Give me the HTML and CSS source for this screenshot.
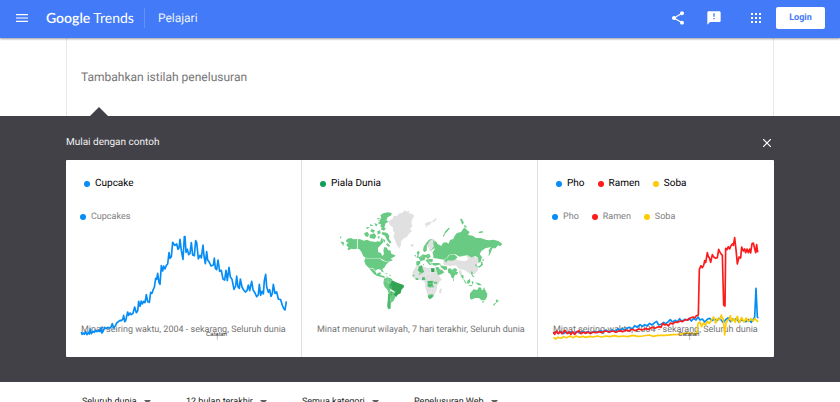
FILE: index.html
```html
<!DOCTYPE html>
<html lang="id">
<head>
<meta charset="utf-8">
<meta name="viewport" content="width=device-width, initial-scale=1">
<title>Google Trends</title>
<link rel="stylesheet" href="styles.css">
</head>
<body>
<header class="topbar">
  <button class="icon-button" type="button" aria-label="Menu">
    <svg width="12" height="8" viewBox="0 0 12 8" fill="currentColor"><path d="M0 0h12v1.200H0zM0 3.400h12v1.200H0zM0 6.800h12v1.200H0z"/></svg>
  </button>
  <a class="logo" href="#"><span class="logo-google">Google</span><span class="logo-trends">Trends</span></a>
  <a class="page-name" href="#">Pelajari</a>
  <div class="actions">
    <button class="icon-button" type="button" aria-label="Bagikan">
      <svg width="16" height="16" viewBox="0 0 24 24" fill="currentColor"><path d="M18 16.080c-.76 0-1.440.3-1.960.77L8.910 12.700c.05-.23.09-.46.09-.7s-.04-.47-.09-.7l7.050-4.110c.54.5 1.250.81 2.040.81 1.660 0 3-1.340 3-3s-1.340-3-3-3-3 1.340-3 3c0 .24.04.47.09.7L8.040 9.810C7.500 9.310 6.790 9 6 9c-1.660 0-3 1.340-3 3s1.340 3 3 3c.79 0 1.500-.31 2.040-.81l7.120 4.160c-.05.21-.08.43-.08.65 0 1.610 1.310 2.920 2.920 2.920s2.920-1.310 2.920-2.920-1.310-2.920-2.920-2.920z"/></svg>
    </button>
    <button class="icon-button" type="button" aria-label="Kirim masukan">
      <svg width="16" height="16" viewBox="0 0 24 24" fill="currentColor"><path d="M20 2H4c-1.100 0-2 .9-2 2v18l4-4h14c1.100 0 2-.9 2-2V4c0-1.100-.9-2-2-2zm-7 12h-2v-2h2v2zm0-4h-2V5h2v5z"/></svg>
    </button>
    <button class="icon-button apps" type="button" aria-label="Aplikasi Google">
      <svg width="16" height="16" viewBox="0 0 24 24" fill="currentColor"><path d="M4.500 4.500h3v3h-3zM10.500 4.500h3v3h-3zM16.500 4.500h3v3h-3zM4.500 10.500h3v3h-3zM10.500 10.500h3v3h-3zM16.500 10.500h3v3h-3zM4.500 16.500h3v3h-3zM10.500 16.500h3v3h-3zM16.500 16.500h3v3h-3z"/></svg>
    </button>
    <button class="login" type="button">Login</button>
  </div>
</header>

<main>
  <div class="container search">
    <input class="search-input" type="text" aria-label="Istilah penelusuran" placeholder="Tambahkan istilah penelusuran">
  </div>

  <section class="examples">
    <div class="container">
      <div class="examples-head">
        <h2>Mulai dengan contoh</h2>
        <button class="icon-button" type="button" aria-label="Tutup">
          <svg width="8" height="8" viewBox="0 0 8 8" fill="none" stroke="currentColor" stroke-width="1.200"><path d="M0 0l8 8M8 0l-8 8"/></svg>
        </button>
      </div>
      <div class="cards">
        <article class="card">
          <ul class="terms"><li class="blue">Cupcake</li></ul>
          <div class="figure">
            <ul class="terms legend"><li class="blue">Cupcakes</li></ul>
            <p class="caption">Minat seiring waktu, 2004 - sekarang, Seluruh dunia</p>
            <svg class="chart" viewBox="18 -75 708 450" aria-hidden="true">
              <path class="line line-blue" d="M64 306L66 313 70 309 73 313 77 305 81 314 85 307 88 312 91 297 94 311 99 304 103 307 107 300 111 305 116 301 120 305 123 293 126 309 131 300 134 292 138 296 143 292 148 295 153 291 157 281 161 294 166 287 170 279 175 275 180 271 184 272 188 268 191 256 194 275 197 272 203 246 206 256 210 249 214 254 219 250 224 231 229 248 233 243 236 214 240 229 244 213 247 222 251 214 255 218 259 194 263 215 268 217 272 187 276 190 279 180 283 172 287 145 290 148 293 130 297 158 300 163 304 107 308 123 311 108 315 117 319 106 323 102 327 68 330 85 334 80 338 37 344 46 350 42 354 58 357 54 360 28 364 62 369 88 373 20 375 20 378 67 382 58 386 74 390 70 394 38 398 75 403 77 407 32 410 37 415 87 420 76 424 84 429 45 432 78 436 101 440 65 443 90 448 97 453 108 460 105 463 84 466 115 470 119 474 90 479 124 484 121 489 147 494 150 498 121 502 152 507 112 511 141 516 148 522 178 527 168 530 138 534 171 538 175 541 147 546 171 551 180 556 186 561 182 565 165 569 182 575 154 579 179 585 189 590 200 595 194 598 163 602 196 606 184 610 192 613 152 617 133 620 170 625 187 629 179 633 199 637 190 640 163 645 190 650 186 655 207 662 209 667 226 672 237 675 240 679 214"/>
              <path class="tick" d="M472 309v20"/><text class="note" x="438" y="319">Catatan</text>
            </svg>
          </div>
        </article>

        <article class="card">
          <ul class="terms"><li class="green">Piala Dunia</li></ul>
          <div class="figure">
            <p class="caption">Minat menurut wilayah, 7 hari terakhir, Seluruh dunia</p>
            <svg class="chart" viewBox="-54 15 708 450" aria-hidden="true">
              <g class="land-none">
                <path d="M206 64L218 56 220 48 232 47 238 40 247 39 254 31 260 35 268 32 266 39 277 42 283 47 277 57 274 67 277 78 270 86 276 94 267 101 261 110 250 116 244 123 242 139 237 145 230 135 225 121 220 110 224 100 219 91 218 80 209 76z"/>
                <path d="M272 132l8 1 2 6-9 1zM314 71l10-5 11 0-5 8-8 2-2 7zM329 64l10-2 7-8 4 4-8 8z"/>
                <path d="M323 134L329 120 338 116 346 121 340 128 344 141 338 149 334 155 327 151 328 142 324 144z"/>
                <path d="M278 216L290 196 306 197 320 203 330 204 345 205 352 217 359 230 366 239 359 244 352 256 350 270 344 281 339 291 327 294 321 280 316 262 315 248 309 240 292 240 281 235 277 227z"/>
                <path d="M362 265l4 2-3 12-5 2 0-9zM368 184l22-4 13-10 8 10 24 4 10-7-7-10 14-2 18 8 9-3 3 14-12 8 5 9-1 9-10 12-15-1-14-10-19-5-8-10-16 2-20-3z"/>
                <path d="M418 211l6 0 3 15-4 5-6-13zM360 205l8 4-1 8-5 1z"/>
              </g>
              <g class="land">
                <path d="M79 120L83 116 92 114 101 118 111 117V146L101 148 94 146 86 151 82 148 86 142 80 138 80 132 86 128 78 126zM59 111l5-2-1 8zM63 124l8 3 2 5-8 1zM68 133h3v4h-3z"/>
                <path d="M113 117L121 118 132 122 141 119 151 124 168 126 174 123 180 126 183 117 186 112 190 127 183 134 174 143 174 156 183 159 187 169 192 161 190 151 193 141 201 143 204 151 211 151 214 161 226 166 218 173 211 176 219 180 212 184 206 182 198 185 189 179 178 174 138 174 130 169 124 155 118 148 113 146z"/>
                <path d="M135 175L179 175 188 182 200 186 214 179 199 193 194 202 187 208 191 217 186 216 182 209 174 207 166 212 159 205 147 204 137 194 133 184z"/>
                <path d="M147 205L158 206 166 214 170 222 179 217 184 219 180 225 193 228 195 235 184 231 170 227 161 221zM154 208l8 12 2 5-7-10zM192 218l12 3-4 2zM206 224l8 1-3 3zM199 229h3v3h-3z"/>
                <path d="M192 236L203 232 215 236 221 245 227 252 213 261 211 272 225 278 228 287 221 302 213 309 212 326 205 328 201 319 204 302 206 280 202 269 194 260 190 250z"/>
                <path d="M190 40l13-3 12 2-1 7-11 6-4 9 7 4-9 5-4 13-12-2 2-8-10-3 7-6-8-5 12-6-3-7zM183 55l-12-1 5 10zM173 73l-10-4 5 11zM161 78l-10-6-1 6zM150 81l-12 1 3 6zM154 87l11 4-5 8-9-5zM132 100l10-5 5 8-3 8-8-2zM149 104l14-4 6 7-5 10-15-3zM172 94l8-3 2 8-9 5zM187 81l11 4-6 7-10-4zM172 110l7-3-2 11zM188 96l14 3 6 8-1 10 7 10-4 4-9-11-6-13-11-5zM187 116l9 4-3 8zM175 128l6 4-6 5zM202 129l8 8-3 4-9-7zM227 165l-4 6-5-2z"/>
                <path d="M340 128L347 123 353 132 364 138 369 128 379 127 386 131 390 120 400 117 404 107 411 99 423 96 433 82 441 90 449 96 444 105 458 107 468 114 481 114 497 119 507 121 520 119 535 123 547 132 541 139 534 136 527 145 516 145 508 165 506 151 513 141 496 145 484 153 479 163 486 171 482 185 475 188 475 174 466 168 455 173 443 166 431 168 418 170 407 163 396 163 386 165 381 173 371 179 355 176 344 168 337 158 344 148z"/>
                <path d="M371 180L383 172 388 164 403 163 413 172 405 180 395 183 383 181 379 188zM369 108l7-14 9-10 5-1-6 9-9 9-4 11zM420 57l5-1 7 12-5 6zM431 77l6-1 4 7-7-2zM475 96l11-3 5 4-12 3zM511 144l6 0-8 21-4 3z"/>
                <path d="M309 151L311 140 318 130 324 122 330 118 337 117 329 123 322 135 320 152 313 157zM339 120l9 8-5 17-10 5 9-11zM290 157l6-5 3 4-4 13 5 4-11 0 4-8zM283 165l5 0-2 7zM299 171l10-8 9 3-4 14-12 3-5-7zM289 184l12-2 0 8-6 7-6-2zM317 164l11-3 4 9-8 6-7-4zM316 180l7-2 11 18-5-1zM323 176l16 2-2 9-9-2zM331 188l4 0 1 8zM339 162l9 5 9 9-17-2zM337 189l20 0 7 4-19 4-8-3zM309 192l3 0-1 7z"/>
                <path d="M297 200l8-4 3 9 4 10-7 6-13-10zM278 224h5v5h-5zM287 234h8v6h-8zM296 219l5 0v5h-5zM306 233l8-2 2 8-10 2zM322 243l18-1-1 12 3 7-9 2-10-2zM341 245l11 0-1 7-9-1zM323 286l11-4 8 3-7 10-7 3zM323 288l10-3 8 5-10 6z"/>
                <path d="M346 202l9-1 6 9 6 1 6 6-9 6-10 3zM360 196l9 1 12 2 0 10-8 1-10-8zM383 208l7-4 5 5 10-5 7 5-4 7 7-1-4 9-6 0-5 12-5-3-4-11-6-3zM399 238h3v4h-3zM424 226l6-1 1 9-4 2-4-8zM429 237l4 2 8 12-5-1zM441 243l9-7 1 11-8 6zM455 242l6 4-4 9zM449 254l8 2-1 3-12-3zM466 247l12 3 8 6-11 0zM454 213l4 3 0 9 6 7-5-1-6-9zM471 199l7-1 6-6-2-7 5 1 2 9-11 8zM465 193l4 0 2 7-4-1zM487 178l6 1-5 6z"/>
                <path d="M450 280L461 268 472 270 476 262 484 263 485 270 489 270 492 261 497 273 502 281 501 291 495 301 484 301 477 294 466 294 453 299 450 294zM486 304l7 0-4 6zM530 298l6 4-6 7-3-5zM525 308l3 2-6 7-3-2z"/>
              </g>
              <path class="land-mid" d="M297 200l8-4 3 9 3 10-5 5-11-8zM306 233l8-2 2 8-10 2zM323 243h14v15l-12 3zM324 289l9-3 6 1-6 8-6 1zM204 283l11-9 2 8-6 12-1 16 0 16-6-1-1-15z"/>
              <path class="land-high" d="M214 242L222 244 232 248 251 255 252 261 244 270 242 280 233 284 229 291 220 283 225 276 215 269 209 263 207 253 214 250zM333 205h10v11h-9z"/>
              <path class="borders" d="M112 116v31l7 5M134 175h45l8 5 12 5M147 204l12 1 8 7M192 240l14 8 9-7M203 233l2 15 9 13-4 15 2 31M214 269l12 5-4 9M371 180l12-7 6-9 16-1 8 9 5-2 20-4 13 7 13-4M413 172l-11 9-15 1M419 174l17 9 10-6M370 183l19 6 17-2M363 196l18 3 2 9M401 205l-4 8 8 5M280 222h26l28 0M293 199l2 22 0 17M306 205v18l-5 16M319 202v22l-8 16M331 204v26l-9 15M345 218h-24M315 249l22 2 13 3M321 262l25 5M323 277l22-2M335 258l-2 26M354 180l-12-4-3-12M329 158l-6 13M321 133l-4 14M310 168l-9 6"/>
            </svg>
          </div>
        </article>

        <article class="card">
          <ul class="terms"><li class="blue">Pho</li><li class="red">Ramen</li><li class="yellow">Soba</li></ul>
          <div class="figure">
            <ul class="terms legend"><li class="blue">Pho</li><li class="red">Ramen</li><li class="yellow">Soba</li></ul>
            <p class="caption">Minat seiring waktu, 2004 - sekarang, Seluruh dunia</p>
            <svg class="chart" viewBox="-6 -60 708 450" aria-hidden="true">
              <path class="line line-blue" d="M40 326L48 321 55 325 63 319 69 326 78 321 86 325 94 320 102 326 110 320 119 324 128 319 137 325 144 320 154 324 163 319 172 323 181 317 190 320 198 315 207 322 217 315 225 320 234 311 240 318 247 310 254 316 261 309 268 307 277 312 284 302 292 307 300 299 307 304 314 299 322 302 329 295 336 300 344 293 350 289 356 300 365 297 371 292 377 296 385 290 391 284 397 291 405 286 412 290 419 281 425 289 434 283 441 286 447 280 454 288 461 280 468 285 474 276 480 285 487 282 494 291 502 283 509 280 516 287 523 282 531 287 537 280 543 284 550 293 557 284 564 279 572 290 578 282 584 286 590 279 597 292 604 284 611 288 618 290 626 284 634 292 640 283 644 277 648 190 652 276 655 279"/>
              <path class="line line-yellow" d="M40 337L47 342 53 337 62 340 71 335 80 338 90 333 98 338 108 333 118 337 128 334 138 337 149 334 160 336 172 333 184 336 197 333 210 335 223 332 236 335 250 333 263 335 278 331 294 334 308 333 329 330 338 334 355 331 376 331 398 329 418 328 438 324 456 325 471 327 474 296 480 291 485 305 490 294 497 300 502 289 508 295 514 285 521 276 527 294 532 281 539 284 544 270 547 279 550 282 554 330 558 294 563 285 568 283 571 272 575 290 581 280 586 292 592 274 598 293 605 278 612 291 619 279 625 290 632 281 639 288 645 281 650 287 655 290"/>
              <path class="line line-red" d="M40 321L44 328 49 318 55 326 60 319 66 326 71 320 75 316 81 326 87 321 93 328 98 320 104 328 110 321 117 317 123 326 130 322 137 325 143 321 151 326 157 321 166 323 175 320 186 322 197 318 208 321 218 318 228 322 238 317 248 320 258 315 267 318 276 313 286 317 296 312 306 315 315 311 326 313 336 307 345 310 355 305 363 307 368 295 374 300 380 298 385 303 391 294 398 297 405 291 413 292 421 288 428 290 436 284 444 285 451 279 459 276 464 279 469 272 475 270 478 133 483 122 487 128 491 121 494 107 497 113 502 83 505 95 508 98 512 112 517 89 522 97 527 100 532 98 536 73 541 84 547 91 551 240 555 243 557 70 561 74 565 65 569 72 573 62 577 57 580 61 584 38 588 74 592 117 597 96 602 99 605 66 610 78 614 72 617 83 621 72 625 83 629 72 632 84 636 56 640 54 643 67 647 83 650 59 653 82"/>
              <path class="tick" d="M449 325v20"/><text class="note" x="415" y="334">Catatan</text>
            </svg>
          </div>
        </article>
      </div>
    </div>
  </section>

  <form class="container filters">
    <label class="filter"><select aria-label="Wilayah"><option>Seluruh dunia</option></select><svg width="7" height="4" viewBox="0 0 7 4"><path d="M0 0h7L3.500 4z"/></svg></label>
    <label class="filter"><select aria-label="Waktu"><option>12 bulan terakhir</option></select><svg width="7" height="4" viewBox="0 0 7 4"><path d="M0 0h7L3.500 4z"/></svg></label>
    <label class="filter"><select aria-label="Kategori"><option>Semua kategori</option></select><svg width="7" height="4" viewBox="0 0 7 4"><path d="M0 0h7L3.500 4z"/></svg></label>
    <label class="filter"><select aria-label="Jenis penelusuran"><option>Penelusuran Web</option></select><svg width="7" height="4" viewBox="0 0 7 4"><path d="M0 0h7L3.500 4z"/></svg></label>
  </form>
</main>
</body>
</html>
```

FILE: styles.css
```css
* { box-sizing: border-box; }

html { scrollbar-width: none; }

body {
  margin: 0;
  background: #fff;
  color: #212121;
  font-family: Roboto, "Liberation Sans", sans-serif;
  font-size: 10px;
  line-height: 16px;
  text-rendering: geometricPrecision;
}

button, input, select { font: inherit; text-rendering: inherit; }
svg { display: block; }

.container {
  max-width: 708px;
  margin: 0 auto;
}

.icon-button {
  display: flex;
  padding: 0;
  border: 0;
  background: none;
  color: #fff;
}

/* Top bar */
.topbar {
  position: relative;
  display: flex;
  align-items: center;
  height: 38px;
  padding: 0 15px 2px 16px;
  background: #437af7;
  color: #fff;
  box-shadow: 0 1px 2px rgba(0, 0, 0, .4);
}

.topbar a { color: inherit; text-decoration: none; }

.logo {
  display: flex;
  gap: 3px;
  margin-left: 18px;
  padding-right: 10px;
  border-right: 1px solid #6391f8;
  font-family: Lato, sans-serif;
  font-size: 14px;
  line-height: 20px;
}

.logo-google { font-weight: 600; }

.page-name {
  margin-left: 13px;
  font-size: 12px;
  opacity: .9;
}

.actions {
  display: flex;
  align-items: center;
  gap: 20px;
  margin-left: auto;
}

.apps { margin-left: 6px; }

.login {
  width: 49px;
  height: 22px;
  margin-left: -8px;
  padding: 0;
  border: 0;
  border-radius: 2px;
  background: #fff;
  color: #437af7;
  font-size: 9px;
  font-weight: 700;
}

/* Search */
.search {
  padding: 28px 14px 28px;
  border: solid #e8e8e8;
  border-width: 0 1px;
}

.search-input {
  display: block;
  width: 100%;
  height: 22px;
  padding: 0;
  border: 0;
  outline: 0;
  background: none;
  font-size: 12px;
}

.search-input::placeholder { color: #757575; opacity: 1; }

/* Examples */
.examples {
  position: relative;
  padding: 18px 0 25px;
  background: #424148;
}

.examples .container { position: relative; }

.examples .container::before {
  content: "";
  position: absolute;
  bottom: 100%;
  left: 24px;
  margin-bottom: 18px;
  border: solid transparent;
  border-width: 0 9px 9px;
  border-bottom-color: #424148;
}

.examples-head {
  display: flex;
  justify-content: space-between;
  align-items: center;
  padding: 1px 3px 9px 0;
  color: #f1f1f1;
}

.examples h2 {
  margin: 0;
  font-size: 10px;
  font-weight: 400;
}

.cards {
  display: grid;
  grid-template-columns: repeat(3, minmax(0, 1fr));
  overflow: hidden;
  border-radius: 1px;
  background: #fff;
}

.card { padding-top: 16px; }
.card + .card { box-shadow: -1px 0 #e0e0e0; }

.terms {
  display: flex;
  gap: 13px;
  margin: 0;
  padding: 0 18px;
  list-style: none;
  color: #000;
}

.terms li {
  display: flex;
  align-items: center;
  gap: 5px;
}

.terms li::before {
  content: "";
  width: 6px;
  height: 6px;
  border-radius: 50%;
  background: currentColor;
}

.terms .blue::before { background: #058df5; }
.terms .green::before { background: #0f9d58; }
.terms .red::before { background: #fc1a1a; }
.terms .yellow::before { background: #fdcb06; }

.figure {
  display: grid;
  grid-template: 1fr / minmax(0, 1fr);
  padding: 13px 0 2px;
}

.figure > * { grid-area: 1 / 1; }

.legend {
  align-self: start;
  padding: 4px 14px;
  color: #808080;
  font-size: 9px;
}

.caption {
  align-self: end;
  margin: 0;
  padding: 0 15px 17px;
  color: #757575;
  font-size: 9px;
  white-space: nowrap;
}

.chart { width: 100%; height: auto; }

.line {
  fill: none;
  stroke-width: 5;
  stroke-linejoin: round;
}

.line-blue { stroke: #058df5; }
.line-red { stroke: #fc1a1a; }
.line-yellow { stroke: #fdcb06; }
.tick { stroke: #999; stroke-width: 2; }

.note {
  fill: #333;
  font-family: "Liberation Sans", sans-serif;
  font-size: 18px;
}

.land { fill: #69cb83; }
.land-mid { fill: #4cb96b; }
.land-none { fill: #e0e0e0; }
.land-high { fill: #33a454; }
.borders { fill: none; stroke: #fff; stroke-opacity: .6; stroke-width: 1; }

/* Filters */
.filters {
  display: flex;
  gap: 35px;
  padding: 12px 16px;
}

.filter {
  display: flex;
  align-items: center;
  gap: 7px;
}

.filter select {
  padding: 0;
  border: 0;
  appearance: none;
  background: none;
  color: #212121;
  font-size: 9px;
}

.filter svg { fill: #616161; }
```
